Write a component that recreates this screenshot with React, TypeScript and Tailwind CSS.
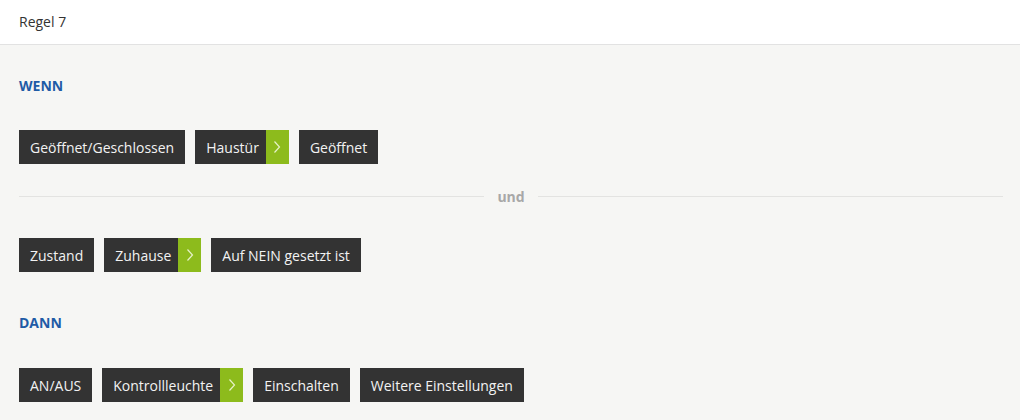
import React from "react";

const Chip = ({ label, arrow }: { label: string; arrow?: boolean }) => (
  <div className="flex h-[34px] bg-[#333333] text-[#f2f2f2]">
    <span className={arrow ? "flex items-center pl-[11px] pr-[7px]" : "flex items-center pl-[11px] pr-[11px]"}>
      {label}
    </span>
    {arrow && (
      <span className="flex w-[23px] items-center justify-center bg-[#8dbb1c]">
        <svg width="8" height="14" viewBox="0 0 8 14" fill="none">
          <path d="M1.5 1.5 L6.5 7 L1.5 12.5" stroke="#e6f2c8" strokeWidth="1.2" />
        </svg>
      </span>
    )}
  </div>
);

export default function App() {
  return (
    <div
      className="h-[420px] w-[1020px] overflow-hidden bg-[#f6f6f4] text-[14px] leading-[19px]"
      style={{ fontFamily: '"Open Sans", "Liberation Sans", sans-serif' }}
    >
      <div className="flex h-[45px] items-center border-b border-[#e2e2e2] bg-white pl-[19px] pb-[2px] text-[#333]">
        Regel 7
      </div>
      <div className="pl-[19px] pr-[17px]">
        <div className="mt-[31px] font-bold text-[#1f5ba6]">WENN</div>
        <div className="mt-[35px] flex gap-[10px]">
          <Chip label="Geöffnet/Geschlossen" />
          <Chip label="Haustür" arrow />
          <Chip label="Geöffnet" />
        </div>
        <div className="mt-[23px] flex items-center">
          <div className="h-px flex-1 bg-[#e3e3e1]" />
          <span className="px-[13px] font-bold text-[#a8a8a8]">und</span>
          <div className="h-px flex-1 bg-[#e3e3e1]" />
        </div>
        <div className="mt-[32px] flex gap-[10px]">
          <Chip label="Zustand" />
          <Chip label="Zuhause" arrow />
          <Chip label="Auf NEIN gesetzt ist" />
        </div>
        <div className="mt-[41px] font-bold text-[#1f5ba6]">DANN</div>
        <div className="mt-[36px] flex gap-[10px]">
          <Chip label="AN/AUS" />
          <Chip label="Kontrollleuchte" arrow />
          <Chip label="Einschalten" />
          <Chip label="Weitere Einstellungen" />
        </div>
      </div>
    </div>
  );
}
